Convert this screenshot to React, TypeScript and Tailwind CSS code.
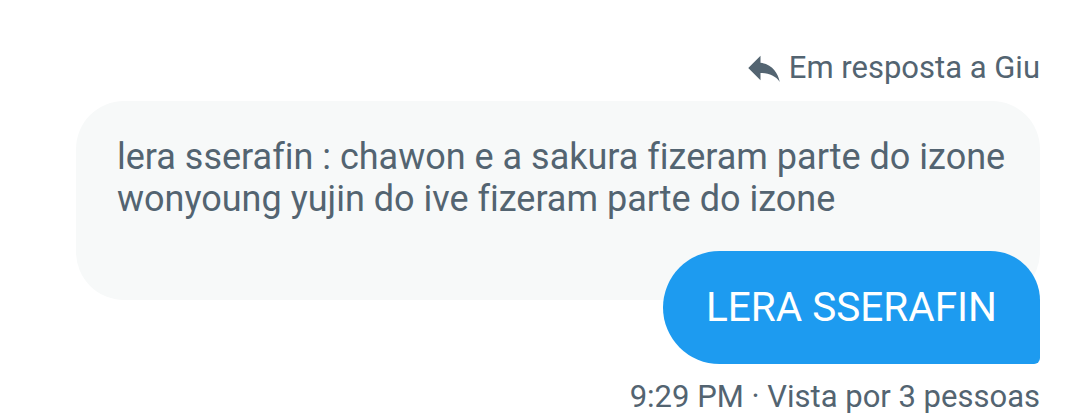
export default function App() {
  return (
    <div
      className="w-[1080px] h-[420px] bg-white overflow-hidden flex flex-col items-end pr-[40px] pt-[47px] [font-variant-ligatures:none]"
      style={{ fontFamily: 'Roboto, "Liberation Sans", sans-serif' }}
    >
      {/* Reply header */}
      <div className="flex items-center gap-[4px] text-[#536471] text-[31px] leading-[36px]">
        <svg className="w-[42px] h-[42px]" viewBox="0 0 24 24" fill="currentColor" aria-hidden="true">
          <path d="M10 9V5l-7 7 7 7v-4.1c5 0 8.5 1.6 11 5.1-1-5-4-10-11-11z" />
        </svg>
        <span>Em resposta a Giu</span>
      </div>

      {/* Quoted message */}
      <div className="mt-[12px] w-[964px] h-[199px] bg-[#f7f9f9] rounded-[48px] pl-[41px] pt-[35px] text-[#536471] text-[36px] leading-[42px]">
        lera sserafin : chawon e a sakura fizeram parte do izone
        <br />
        wonyoung yujin do ive fizeram parte do izone
      </div>

      {/* Reply bubble */}
      <div className="-mt-[49px] h-[113px] flex items-center bg-[#1d9bf0] text-white text-[40.5px] pl-[43px] pr-[43px] rounded-l-[57px] rounded-tr-[50px] rounded-br-[6px]">
        LERA SSERAFIN
      </div>

      {/* Meta */}
      <div className="mt-[15px] text-[#536471] text-[31px] leading-[36px]">
        9:29 PM · Vista por 3 pessoas
      </div>
    </div>
  );
}
